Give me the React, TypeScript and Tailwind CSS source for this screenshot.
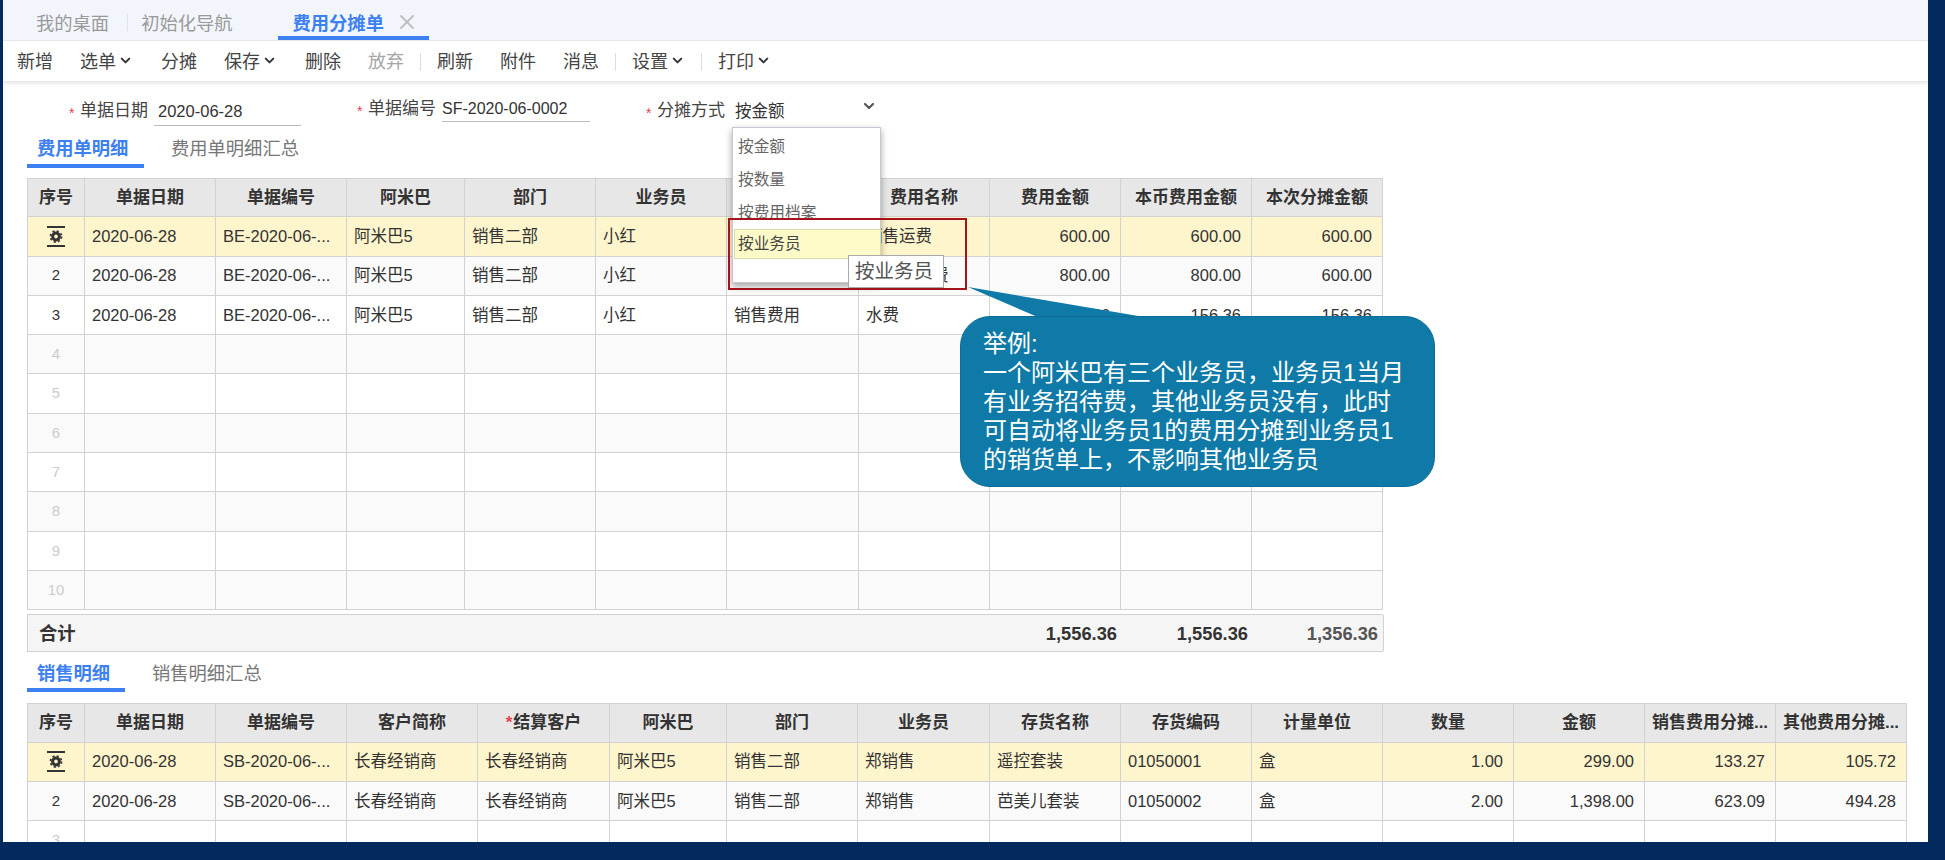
import { ChevronDown, X } from "lucide-react";
import type { ReactNode } from "react";

const cols1 = "grid w-[1356px] auto-rows-[39.3px] grid-cols-[58px_131px_131px_118px_131px_131px_132px_131px_131px_131px_131px]";
const cols2 = "grid w-[1880px] auto-rows-[39.3px] grid-cols-[58px_131px_131px_131px_132px_117px_131px_132px_131px_131px_131px_131px_131px_131px_131px]";

const head1 = ["序号", "单据日期", "单据编号", "阿米巴", "部门", "业务员", "费用类型", "费用名称", "费用金额", "本币费用金额", "本次分摊金额"];
const rows1 = [
  ["2020-06-28", "BE-2020-06-...", "阿米巴5", "销售二部", "小红", "销售费用", "销售运费", "600.00", "600.00", "600.00"],
  ["2020-06-28", "BE-2020-06-...", "阿米巴5", "销售二部", "小红", "销售费用", "业务招待费", "800.00", "800.00", "600.00"],
  ["2020-06-28", "BE-2020-06-...", "阿米巴5", "销售二部", "小红", "销售费用", "水费", "156.36", "156.36", "156.36"],
];
const head2 = ["序号", "单据日期", "单据编号", "客户简称", "结算客户", "阿米巴", "部门", "业务员", "存货名称", "存货编码", "计量单位", "数量", "金额", "销售费用分摊...", "其他费用分摊..."];
const rows2 = [
  ["2020-06-28", "SB-2020-06-...", "长春经销商", "长春经销商", "阿米巴5", "销售二部", "郑销售", "遥控套装", "01050001", "盒", "1.00", "299.00", "133.27", "105.72"],
  ["2020-06-28", "SB-2020-06-...", "长春经销商", "长春经销商", "阿米巴5", "销售二部", "郑销售", "芭美儿套装", "01050002", "盒", "2.00", "1,398.00", "623.09", "494.28"],
];

function RowMark() {
  return (
    <svg width="20" height="21" viewBox="0 0 20 21" className="text-[#333]">
      <rect x="1" y="0" width="18" height="2" fill="currentColor" />
      <rect x="1" y="19" width="18" height="2" fill="currentColor" />
      <circle cx="10" cy="10.5" r="3.4" fill="none" stroke="currentColor" strokeWidth="3" />
      <circle cx="10" cy="10.5" r="5.6" fill="none" stroke="currentColor" strokeWidth="1.6" strokeDasharray="2.2 2.2" />
    </svg>
  );
}

function Cell({ children, right, bg }: { children?: ReactNode; right?: boolean; bg: string }) {
  return (
    <div
      className={`flex items-center overflow-hidden whitespace-nowrap border-r border-b border-[#d2d2d2] text-[16.5px] text-[#333] ${bg} ${
        right ? "justify-end pr-[10px]" : "pl-[7px]"
      }`}
    >
      {children}
    </div>
  );
}

function HeadRow({ labels }: { labels: string[] }) {
  return (
    <>
      {labels.map((label) => (
        <div
          key={label}
          className="flex items-center justify-center whitespace-nowrap border-t border-r border-b border-[#d2d2d2] bg-[#e7e7e7] text-[17px] font-bold text-[#333] first:border-l"
        >
          {label === "结算客户" ? <span className="mr-[1px] text-[#e8424f]">*</span> : null}
          {label}
        </div>
      ))}
    </>
  );
}

function DataRow({ index, values, rightFrom, muted }: { index: number; values: string[]; rightFrom: number; muted?: boolean }) {
  const bg = index === 0 ? "bg-[#fff5cd]" : index % 2 === 1 ? "bg-[#fafafa]" : "bg-white";
  return (
    <>
      <div className={`flex items-center justify-center border-r border-b border-l border-[#d2d2d2] text-[15px] ${bg} ${muted ? "text-[#ccc]" : "text-[#333]"}`}>
        {index === 0 ? <RowMark /> : index + 1}
      </div>
      {values.map((v, i) => (
        <Cell key={i} bg={bg} right={i >= rightFrom}>
          {v}
        </Cell>
      ))}
    </>
  );
}

function SubTabs({ active, other, underline, gap }: { active: string; other: string; underline: string; gap: string }) {
  return (
    <div className="ml-[24px] flex items-stretch text-[18.3px]">
      <div className={`border-b-4 border-[#3c80f2] pl-[10px] font-bold text-[#3c80f2] ${underline}`}>{active}</div>
      <div className={`text-[#777] ${gap}`}>{other}</div>
    </div>
  );
}

function ToolItem({ label, menu, muted }: { label: string; menu?: boolean; muted?: boolean }) {
  return (
    <span className={`flex items-center gap-[2px] ${muted ? "text-[#a5a5a5]" : "text-[#444]"} ${menu ? "mr-[1px]" : ""}`}>
      {label}
      {menu ? <ChevronDown size={15} strokeWidth={3.2} className="-mt-[3px] text-[#333]" /> : null}
    </span>
  );
}

function Field({ label, value, className, lineClass }: { label: string; value: string; className: string; lineClass: string }) {
  return (
    <div className={`flex items-start ${className}`}>
      <span className="mt-[7px] w-[11px] text-[14px] leading-none text-[#e8424f]">*</span>
      <span className="w-[74px] text-[17px] leading-[24px] text-[#444]">{label}</span>
      <span className={`border-b border-[#bbb] leading-[24px] text-[#333] ${lineClass}`}>{value}</span>
    </div>
  );
}

export default function App() {
  return (
    <div className="relative h-[860px] w-[1945px] overflow-hidden bg-[#032a5e] pb-[18px] pl-[3px] pr-[17px] font-['Liberation_Sans','Noto_Sans_CJK_SC',sans-serif]">
      <div className="h-full overflow-hidden bg-white">
        <div className="flex h-[41px] items-stretch border-b border-[#e6eaf2] bg-[#f2f6fc] pl-[33px] text-[18.3px] text-[#9a9a9a]">
          <span className="pt-[10px]">我的桌面</span>
          <span className="ml-[18px] mt-[14px] h-[17px] w-px bg-[#dde1e8]" />
          <span className="ml-[13px] pt-[10px]">初始化导航</span>
          <div className="ml-[45px] flex w-[151px] items-start gap-[11px] border-b-4 border-[#3c80f2] pl-[15px] pt-[10px]">
            <span className="font-bold text-[#3c80f2]">费用分摊单</span>
            <X size={24} strokeWidth={1.8} className="shrink-0 text-[#bdbdbd]" />
          </div>
        </div>

        <div className="relative flex h-[40px] items-center gap-[27px] pl-[14px] pt-[2px] text-[18px] shadow-[0_2px_4px_rgba(0,0,0,0.12)]">
          <ToolItem label="新增" />
          <ToolItem label="选单" menu />
          <ToolItem label="分摊" />
          <ToolItem label="保存" menu />
          <ToolItem label="删除" />
          <div className="flex items-center gap-[16px]">
            <ToolItem label="放弃" muted />
            <span className="h-[18px] w-px bg-[#ddd]" />
            <ToolItem label="刷新" />
          </div>
          <ToolItem label="附件" />
          <div className="flex items-center gap-[16px]">
            <ToolItem label="消息" />
            <span className="h-[18px] w-px bg-[#ddd]" />
            <ToolItem label="设置" menu />
          </div>
          <div className="-ml-[12px] flex items-center gap-[16px]">
            <span className="h-[18px] w-px bg-[#ddd]" />
            <ToolItem label="打印" menu />
          </div>
        </div>

        <div className="flex h-[49px] pl-[66px] pt-[18px]">
          <Field label="单据日期" value="2020-06-28" className="w-[288px]" lineClass="h-[27px] w-[147px] pl-[4px] text-[16.5px]" />
          <Field label="单据编号" value="SF-2020-06-0002" className="w-[289px] -mt-[2px]" lineClass="h-[25px] w-[148px] text-[16px]" />
          <div className="flex w-[240px] items-start">
            <span className="mt-[7px] w-[11px] text-[14px] leading-none text-[#e8424f]">*</span>
            <span className="w-[78px] text-[17px] leading-[24px] text-[#444]">分摊方式</span>
            <span className="w-[126px] text-[16.5px] leading-[24px] text-[#333]">按金额</span>
            <ChevronDown size={16} strokeWidth={3.2} className="-mt-[1px] text-[#555]" />
          </div>
        </div>

        <SubTabs active="费用单明细" other="费用单明细汇总" underline="h-[38px] w-[117px] pt-[5px]" gap="ml-[27px] pt-[5px]" />

        <div className="ml-[24px] mt-[10px]">
          <div className={cols1}>
            <HeadRow labels={head1} />
            {rows1.map((r, i) => (
              <DataRow key={i} index={i} values={r} rightFrom={7} />
            ))}
            {[3, 4, 5, 6, 7, 8, 9].map((i) => (
              <DataRow key={i} index={i} muted values={["", "", "", "", "", "", "", "", "", ""]} rightFrom={7} />
            ))}
          </div>
          <div className="mt-[4px] grid w-[1356px] grid-cols-[58px_131px_131px_118px_131px_131px_132px_131px_131px_131px_131px] auto-rows-[36px] border-y border-l border-[#d2d2d2] bg-[#f5f5f5] text-[18.3px] font-bold text-[#333]">
            <div className="col-span-8 flex items-center pl-[11px]">合计</div>
            <div className="flex items-center justify-end pr-[5px]">1,556.36</div>
            <div className="flex items-center justify-end pr-[5px]">1,556.36</div>
            <div className="flex items-center justify-end border-r border-[#d2d2d2] pr-[5px] text-[#555]">1,356.36</div>
          </div>
        </div>

        <SubTabs active="销售明细" other="销售明细汇总" underline="h-[40px] w-[98px] pt-[8px]" gap="ml-[27px] pt-[8px]" />

        <div className="ml-[24px] mt-[11px]">
          <div className={cols2}>
            <HeadRow labels={head2} />
            {rows2.map((r, i) => (
              <DataRow key={i} index={i} values={r} rightFrom={10} />
            ))}
            <DataRow index={2} muted values={Array(14).fill("")} rightFrom={10} />
          </div>
        </div>
      </div>

      {/* dropdown list over the table */}
      <div className="absolute left-[732px] top-[127px] h-[156px] w-[149px] overflow-hidden border border-[#c4c8d0] bg-white pl-[5px] text-[15.7px] text-[#666] shadow-[0_3px_7px_rgba(0,0,0,0.35)]">
        <div className="mt-[8px] h-[33px] leading-[22px]">按金额</div>
        <div className="h-[33px] leading-[22px]">按数量</div>
        <div className="h-[28px] leading-[22px]">按费用档案</div>
      </div>
      <div className="absolute left-[734px] top-[229px] flex h-[30px] w-[147px] items-center border border-[#dcd9b0] bg-[#fffbc9] pl-[3px] text-[15.7px] text-[#444]">
        按业务员
      </div>

      <div className="absolute left-[728px] top-[218px] h-[72px] w-[239px] border-2 border-[#a5111d]" />

      <div className="absolute left-[848px] top-[255px] flex h-[33px] w-[96px] items-center border border-[#aaa] bg-white pl-[6px] text-[19.5px] text-[#555]">
        按业务员
      </div>

      <svg className="absolute left-[960px] top-[280px]" width="210" height="40" viewBox="0 0 210 40">
        <polygon points="8,7 190,38 80,38" fill="#0f7aa7" />
      </svg>
      <div className="absolute left-[960px] top-[316px] h-[171px] w-[475px] rounded-[30px] border border-[#0d6d96] bg-[#0f7aa7] pl-[22px] pt-[12px] text-[24px] leading-[29px] text-white">
        举例:
        <br />
        一个阿米巴有三个业务员，业务员1当月
        <br />
        有业务招待费，其他业务员没有，此时
        <br />
        可自动将业务员1的费用分摊到业务员1
        <br />
        的销货单上，不影响其他业务员
      </div>
    </div>
  );
}
